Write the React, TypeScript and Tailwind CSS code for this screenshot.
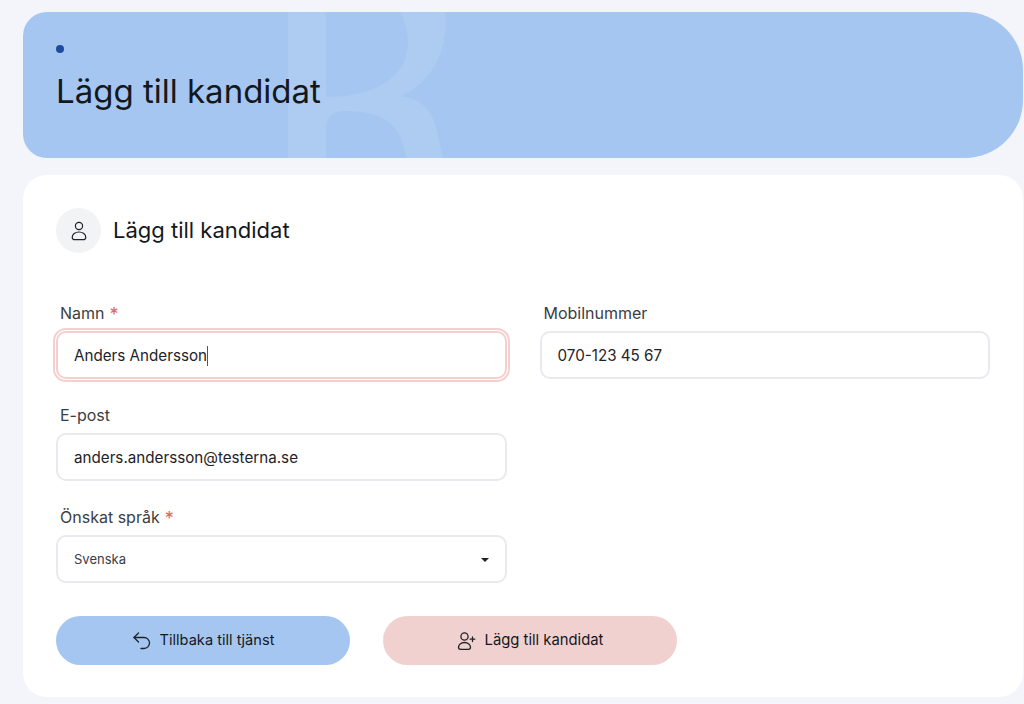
const font = "font-['Inter',sans-serif]";

function PersonIcon() {
  return (
    <svg width="18" height="22" viewBox="0 0 18 22" fill="none" stroke="#1f2328" strokeWidth="1.2">
      <circle cx="9" cy="6" r="3.6" />
      <path d="M9 12c-3.800 0-6.800 2.400-6.800 5.200 0 1.600 1 2.500 2.700 2.500h8.200c1.700 0 2.700-.9 2.700-2.500C15.800 14.400 12.800 12 9 12z" />
    </svg>
  );
}

function BackIcon() {
  return (
    <svg width="20" height="20" viewBox="0 0 20 20" fill="none" stroke="#1f2328" strokeWidth="1.3" strokeLinecap="round" strokeLinejoin="round">
      <path d="M6.500 2 2 6.500l4.500 4.500" />
      <path d="M2 6.500h10a5.500 5.500 0 0 1 0 11H9" />
    </svg>
  );
}

function AddUserIcon() {
  return (
    <svg width="20" height="20" viewBox="0 0 20 20" fill="none" stroke="#1f2328" strokeWidth="1.3" strokeLinecap="round" strokeLinejoin="round">
      <circle cx="7.500" cy="5.500" r="3.600" />
      <path d="M7.500 11.500c-3.500 0-6 2.200-6 4.800 0 1.300.9 2 2.200 2h7.600c1.300 0 2.200-.7 2.200-2 0-2.600-2.500-4.800-6-4.800z" />
      <path d="M15.500 6v4.500M13.200 8.200h4.600" />
    </svg>
  );
}

function Field({ label, required, children }: { label: string; required?: boolean; children: React.ReactNode }) {
  return (
    <div>
      <label className="flex items-start pl-1 mb-[7px] h-[21px] text-base leading-[21px] text-[#3a3e44]">
        {label}
        {required && <span className="ml-[5px] text-lg leading-[24px] text-[#d9655f]">*</span>}
      </label>
      {children}
    </div>
  );
}

function TextBox({ value, focused }: { value: string; focused?: boolean }) {
  return (
    <div
      className={
        focused
          ? "flex items-center h-12 pt-[2px] px-4 bg-white rounded-[10px] border-2 border-[#f5cfcd] outline-2 outline-offset-1 outline-[#f5cfcd] text-[15.2px] text-[#1f2328]"
          : "flex items-center h-12 pt-[2px] px-4 bg-white rounded-[10px] border-2 border-[#e8eaef] text-[15.2px] text-[#1f2328]"
      }
    >
      {value}
      {focused && <span className="w-px h-5 bg-[#555]" />}
    </div>
  );
}

export default function App() {
  return (
    <div className={`${font} w-[1024px] h-[704px] overflow-hidden bg-[#f3f5fb] pl-[23px] pr-px pt-3`}>
      <header className="relative h-[146px] overflow-hidden bg-[#a5c6f1] rounded-l-[24px] rounded-r-[58px] pl-[33px] pt-[33px]">
        <svg className="absolute left-0 top-0" width="1000" height="146" viewBox="23 12 1000 146" fill="#fff" fillOpacity="0.1">
          <path d="M288 12h38v85c44 0 82-17 82-54 0-13-4-23-8-31h45c5 38-15 73-45 84 25 4 32 16 37 34l6 28h-37c-4-33-21-47-61-47-13 0-19 7-19 19v28h-38z" />
        </svg>
        <div className="relative">
          <div className="w-2 h-2 rounded-full bg-[#1f4b9e]" />
          <h1 className="mt-4 text-[33px] leading-[44px] font-normal text-[#14181d]">Lägg till kandidat</h1>
        </div>
      </header>

      <main className="mt-[17px] h-[522px] bg-white rounded-[24px] pt-[33px] px-[33px]">
        <div className="flex items-center gap-3">
          <div className="flex items-center justify-center w-[45px] h-[45px] rounded-full bg-[#f2f3f5]">
            <PersonIcon />
          </div>
          <h2 className="text-[22px] font-normal text-[#14181d]">Lägg till kandidat</h2>
        </div>

        <div className="mt-[50px] grid grid-cols-2 gap-x-[33px] gap-y-[26px]">
          <Field label="Namn" required>
            <TextBox value="Anders Andersson" focused />
          </Field>
          <Field label="Mobilnummer">
            <TextBox value="070-123 45 67" />
          </Field>
          <Field label="E-post">
            <TextBox value="anders.andersson@testerna.se" />
          </Field>
          <div />
          <Field label="Önskat språk" required>
            <div className="flex items-center justify-between h-12 pt-[2px] px-4 bg-white rounded-[10px] border-2 border-[#e8eaef] text-[13px] text-[#3a3e44]">
              Svenska
              <span className="w-0 h-0 border-x-4 border-x-transparent border-t-[4px] border-t-[#1f2328]" />
            </div>
          </Field>
        </div>

        <div className="mt-[33px] flex gap-[33px]">
          <button className="flex items-center justify-center gap-2 w-[294px] h-[49px] rounded-full bg-[#a5c6f1] text-[14.6px] text-[#14181d]">
            <BackIcon />
            Tillbaka till tjänst
          </button>
          <button className="flex items-center justify-center gap-2 w-[294px] h-[49px] rounded-full bg-[#f1d1d0] text-[14.8px] text-[#14181d]">
            <AddUserIcon />
            Lägg till kandidat
          </button>
        </div>
      </main>
    </div>
  );
}
